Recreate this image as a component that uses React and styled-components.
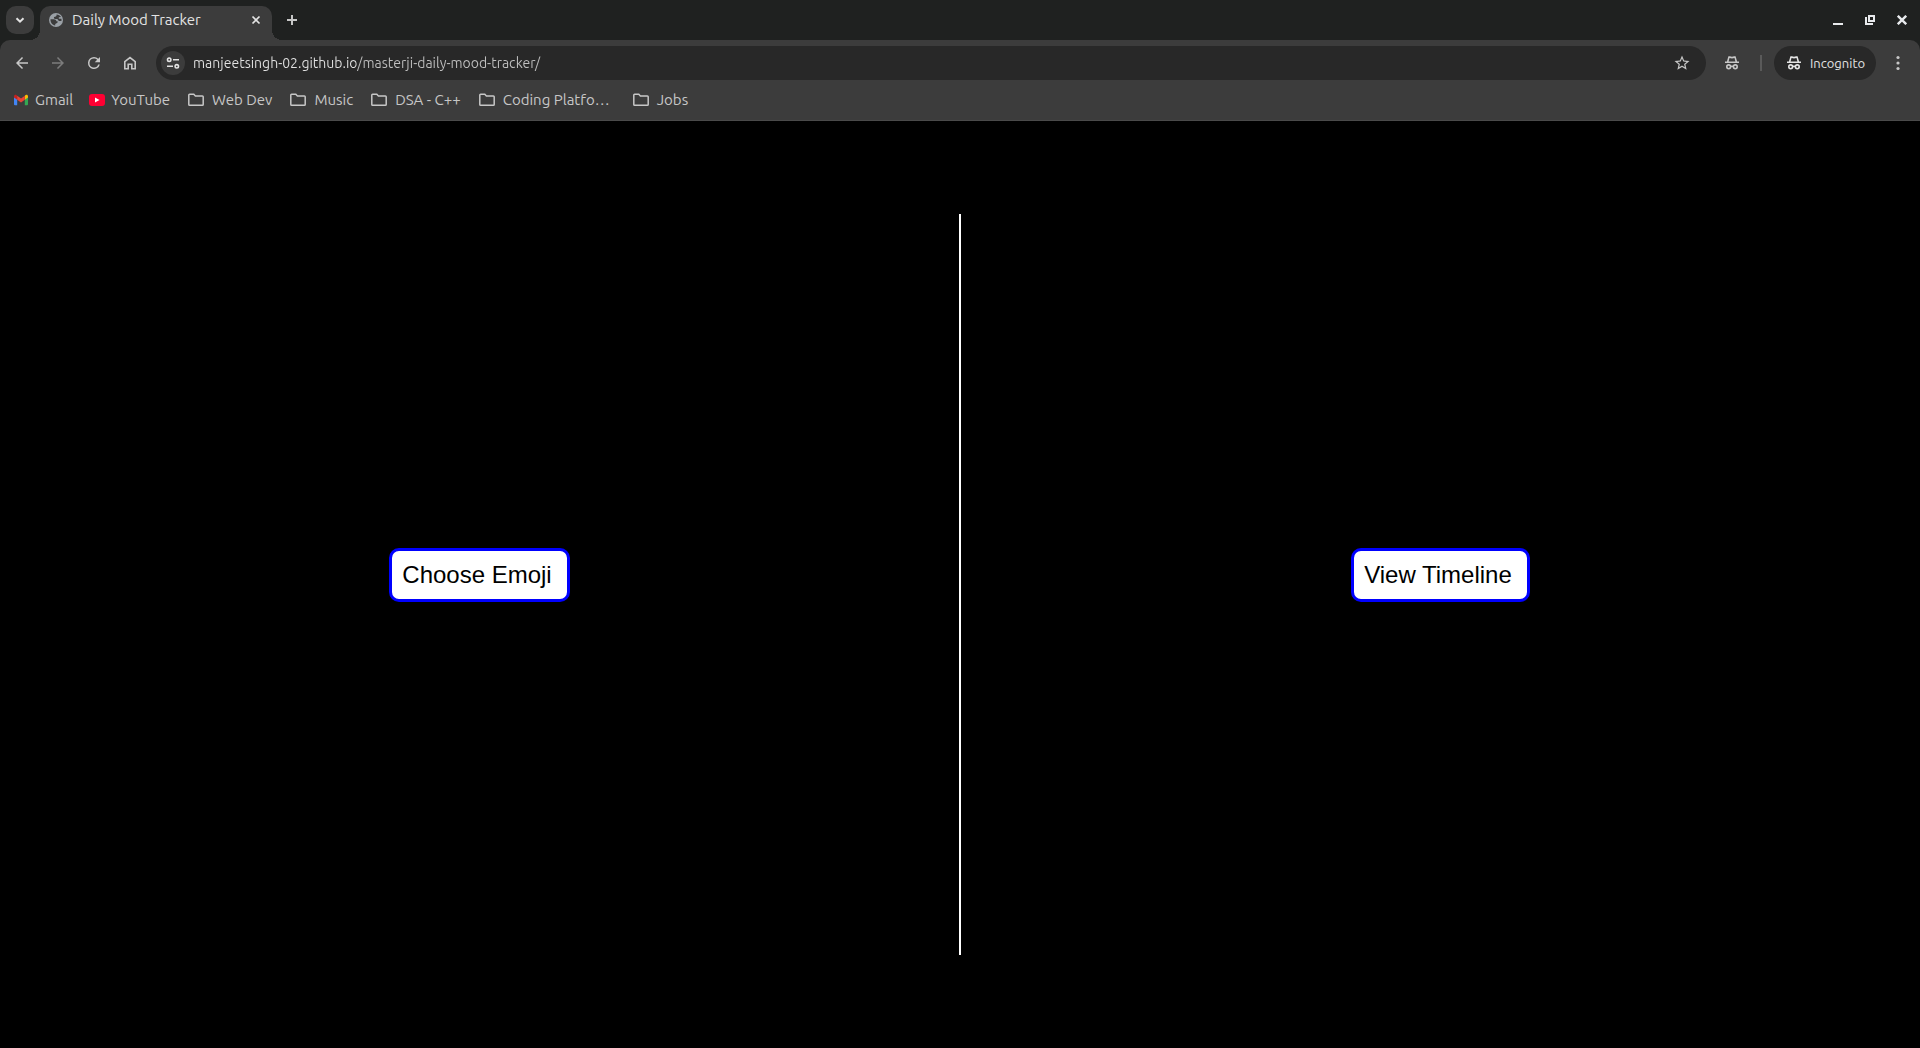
import React from "react";
import styled, { createGlobalStyle } from "styled-components";

const GlobalStyle = createGlobalStyle`
  *, *::before, *::after { box-sizing: border-box; }
  html, body, #root { height: 100%; }
  body {
    margin: 0;
    background: #000;
    font-family: "Liberation Sans", Arial, sans-serif;
  }
  button { font: inherit; border: 0; padding: 0; cursor: pointer; }
  svg { display: block; flex: none; }
`;

const Window = styled.div`
  display: flex;
  flex-direction: column;
  min-height: 100%;
`;

const Chrome = styled.header`
  background: #1f2120;
  color: #c7c7c7;
  font-family: Ubuntu, "Noto Sans", sans-serif;
`;

const TabStrip = styled.div`
  display: flex;
  align-items: center;
  height: 40px;
  padding: 0 4px 0 6px;
`;

const TabSearch = styled.button`
  display: grid;
  place-items: center;
  width: 28px;
  height: 28px;
  margin-right: 6px;
  border-radius: 10px;
  background: #3c3c3c;
  color: #e3e3e3;
`;

const Tab = styled.div`
  position: relative;
  display: flex;
  align-items: center;
  align-self: flex-end;
  gap: 8px;
  width: 232px;
  height: 34px;
  padding: 0 8px 6px;
  border-radius: 10px 10px 0 0;
  background: #3c3c3c;
  color: #e3e3e3;

  &::before,
  &::after {
    content: "";
    position: absolute;
    bottom: 0;
    width: 10px;
    height: 10px;
  }
  &::before {
    right: 100%;
    background: radial-gradient(circle at 0 0, transparent 10px, #3c3c3c 10px);
  }
  &::after {
    left: 100%;
    background: radial-gradient(circle at 100% 0, transparent 10px, #3c3c3c 10px);
  }
`;

const TabTitle = styled.span`
  flex: 1;
  overflow: hidden;
  white-space: nowrap;
  font-size: 15px;
  line-height: 20px;
`;

const IconButton = styled.button`
  display: grid;
  place-items: center;
  flex: none;
  width: ${(p) => p.$size || 28}px;
  height: ${(p) => p.$size || 28}px;
  border-radius: 50%;
  background: ${(p) => p.$fill || "transparent"};
  color: ${(p) => p.$tone || "#c7c7c7"};
`;

const WindowControls = styled.div`
  display: flex;
  gap: 4px;
  margin-left: auto;
`;

const Toolbar = styled.div`
  display: flex;
  align-items: center;
  height: 46px;
  padding: 0 8px;
  border-radius: 10px 10px 0 0;
  background: #3c3c3c;
`;

const NavButtons = styled.nav`
  display: flex;
  gap: 8px;
  margin-right: 12px;
`;

const AddressBar = styled.div`
  display: flex;
  align-items: center;
  flex: 1;
  height: 34px;
  padding: 0 10px 0 5px;
  border-radius: 17px;
  background: #282828;
`;

const AddressInput = styled.input`
  flex: 1;
  min-width: 0;
  height: 24px;
  padding: 0;
  margin: 0 8px;
  border: 0;
  outline: 0;
  background: linear-gradient(to right, #e3e3e3 163px, #c0c0c0 163px);
  background-clip: text;
  -webkit-text-fill-color: transparent;
  color: #e3e3e3;
  font: 14px/24px Ubuntu, "Noto Sans", sans-serif;
`;

const Separator = styled.span`
  width: 2px;
  height: 16px;
  margin: 0 12px 0 2px;
  background: #5a5a5a;
`;

const Profile = styled.button`
  display: flex;
  align-items: center;
  gap: 8px;
  min-width: 102px;
  height: 34px;
  padding: 0 10px 0 12px;
  margin-right: 8px;
  border-radius: 17px;
  background: #282828;
  color: #e3e3e3;
  font-size: 13px;
`;

const Bookmarks = styled.nav`
  display: flex;
  align-items: center;
  gap: 16px;
  height: 35px;
  padding: 0 13px 7px;
  border-bottom: 1px solid #4a4a4a;
  background: #3c3c3c;
`;

const Bookmark = styled.a`
  display: flex;
  align-items: center;
  gap: 6px;
  color: #c7c7c7;
  font-size: 15px;
  line-height: 20px;
  text-decoration: none;
  white-space: nowrap;
`;

const BookmarkLabel = styled.span`
  min-width: ${(p) => (p.$full ? "112px" : "0")};
`;

const Main = styled.main`
  display: flex;
  align-items: center;
  flex: 1;
`;

const Panel = styled.section`
  display: flex;
  justify-content: center;
  flex: 1;
  padding-bottom: 19px;
`;

const Divider = styled.div`
  align-self: stretch;
  width: 2px;
  margin: 93px 0;
  background: #fff;
`;

const ActionButton = styled.button`
  && {
    padding: 10px 15px 10px 10px;
    border: 3px solid #00f;
  }
  border-radius: 10px;
  background: #fff;
  color: #000;
  font-size: 24px;
  line-height: 28px;
`;

const Icon = ({ size = 18, box = 24, children }) => (
  <svg width={size} height={size} viewBox={`0 0 ${box} ${box}`} fill="currentColor" aria-hidden="true">
    {children}
  </svg>
);

const Stroke = ({ size = 16, width = 2, children }) => (
  <svg
    width={size}
    height={size}
    viewBox={`0 0 ${size} ${size}`}
    fill="none"
    stroke="currentColor"
    strokeWidth={width}
    aria-hidden="true"
  >
    {children}
  </svg>
);

const Globe = () => (
  <svg width="16" height="16" viewBox="0 0 16 16" aria-hidden="true">
    <circle cx="8" cy="8" r="7" fill="#9aa0a6" />
    <path
      fill="#3c3c3c"
      d="M2.500 7.300h3.300c1.400 0 2.300.7 2.600 1.900h1.200v1.300c-.9 1-2.100.9-2.400 1.700v1.300C4.400 13.200 2.300 10.600 2.500 7.300zM8.600 2.500c1.800 0 3.500 1 4.400 2.600l-2.200.2v1.400h2.600c.2.800.2 1.600 0 2.200-1.200.3-2.600.2-3.200-.7L9.400 7H7.200C6 7 5.600 5.900 6.100 5l1.700-.6c.7-.3.800-1 .8-1.900z"
    />
  </svg>
);

const Incognito = () => (
  <Icon size={16} box={16}>
    <path fillRule="evenodd" d="M4.400 1.200h1.500l2.100.6 2.100-.6h1.500l1.500 5.200H15v1.700H1V6.400h1.900zM5.500 3l-.9 3.400h6.800L10.500 3 8 3.600z" />
    <g fill="none" stroke="currentColor" strokeWidth="1.600">
      <circle cx="4.700" cy="11.800" r="1.900" />
      <circle cx="11.300" cy="11.800" r="1.900" />
      <path d="M6.600 11.500q1.400-.6 2.800 0" />
    </g>
  </Icon>
);

const Gmail = () => (
  <svg width="16" height="16" viewBox="-1 -1 16 16" aria-hidden="true">
    <path fill="#4285f4" d="M0 3.500l3.200 2.400v6.400H1a1 1 0 0 1-1-1z" />
    <path fill="#34a853" d="M14 3.500l-3.200 2.400v6.400H13a1 1 0 0 0 1-1z" />
    <path fill="#fbbc04" d="M10.800 2.700l.9-.7C12.700 1.300 14 2 14 3.200v1.200l-3.200 2.400z" />
    <path fill="#c5221f" d="M0 4.400V3.200C0 2 1.300 1.300 2.300 2l.9.700v4.100z" />
    <path fill="#ea4335" d="M3.200 6.800V2.700L7 5.500l3.800-2.800v4.100L7 9.600z" />
  </svg>
);

const YouTube = () => (
  <svg width="16" height="12" viewBox="0 0 16 12" aria-hidden="true">
    <rect width="16" height="12" rx="3" fill="#ff0033" />
    <path fill="#fff" d="M6 3.500v5L10.500 6z" />
  </svg>
);

const Folder = () => (
  <svg width="20" height="14" viewBox="-2 0 20 14" fill="none" stroke="currentColor" strokeWidth="1.500" aria-hidden="true">
    <path d="M.8 2q0-.8.8-.8h4.200l1.600 1.700h7q.8 0 .8.800v7.700q0 .8-.8.800H1.600q-.8 0-.8-.8z" />
  </svg>
);

const bookmarks = [
  { label: "Gmail", icon: Gmail },
  { label: "YouTube", icon: YouTube },
  { label: "Web Dev", icon: Folder },
  { label: "Music", icon: Folder },
  { label: "DSA - C++", icon: Folder },
  { label: "Coding Platfo…", icon: Folder, full: true },
  { label: "Jobs", icon: Folder },
];

export default function App() {
  return (
    <Window>
      <GlobalStyle />
      <Chrome>
        <TabStrip>
          <TabSearch aria-label="Search tabs">
            <Stroke size={10}><path d="M1.500 3.200L5 6.700l3.500-3.500" /></Stroke>
          </TabSearch>
          <Tab>
            <Globe />
            <TabTitle>Daily Mood Tracker</TabTitle>
            <IconButton $size={16} $tone="#e3e3e3" aria-label="Close tab">
              <Stroke size={10} width={1.7}><path d="M1.500 1.500l7 7M8.500 1.500l-7 7" /></Stroke>
            </IconButton>
          </Tab>
          <IconButton $size={40} aria-label="New tab">
            <Stroke size={10}><path d="M5 0v10M0 5h10" /></Stroke>
          </IconButton>
          <WindowControls>
            <IconButton $tone="#e8eaed" aria-label="Minimize">
              <Stroke size={10}><path d="M0 9h10" /></Stroke>
            </IconButton>
            <IconButton $tone="#e8eaed" aria-label="Restore">
              <Stroke size={10}><path d="M4 1h5v5H4zM1 2v7h7" /></Stroke>
            </IconButton>
            <IconButton $tone="#e8eaed" aria-label="Close">
              <Stroke size={10} width={2.4}><path d="M.8.8l8.400 8.400M9.200.8L.8 9.200" /></Stroke>
            </IconButton>
          </WindowControls>
        </TabStrip>
        <Toolbar>
          <NavButtons aria-label="Browser navigation">
            <IconButton aria-label="Back">
              <Icon><path d="M20 11H7.830l5.590-5.590L12 4l-8 8 8 8 1.410-1.410L7.830 13H20z" /></Icon>
            </IconButton>
            <IconButton $tone="#7c7c7c" aria-label="Forward">
              <Icon><path d="M12 4l-1.410 1.410L16.170 11H4v2h12.170l-5.580 5.590L12 20l8-8z" /></Icon>
            </IconButton>
            <IconButton aria-label="Reload">
              <Icon><path d="M17.650 6.350A7.960 7.960 0 0 0 12 4a8 8 0 1 0 7.730 10h-2.080A6 6 0 1 1 12 6c1.660 0 3.140.69 4.220 1.780L13 11h7V4z" /></Icon>
            </IconButton>
            <IconButton aria-label="Home">
              <Stroke width={1.6}><path d="M2.800 6.600L8 2.500l5.200 4.100v7.100H9.800V9.300H6.200v4.400H2.800z" /></Stroke>
            </IconButton>
          </NavButtons>
          <AddressBar>
            <IconButton $size={24} $fill="#3c3c3c" $tone="#e3e3e3" aria-label="View site information">
              <Stroke width={1.6}>
                <circle cx="4.200" cy="4.700" r="1.700" />
                <path d="M8 4.700h6M2 11.300h6" />
                <circle cx="11.800" cy="11.300" r="1.700" />
              </Stroke>
            </IconButton>
            <AddressInput
              aria-label="Address"
              spellCheck={false}
              defaultValue="manjeetsingh-02.github.io/masterji-daily-mood-tracker/"
            />
            <IconButton aria-label="Bookmark this tab">
              <Icon><path d="M22 9.240l-7.190-.62L12 2 9.190 8.630 2 9.240l5.460 4.730L5.820 21 12 17.270 18.180 21l-1.630-7.030zM12 15.400l-3.760 2.270 1-4.280-3.320-2.880 4.380-.38L12 6.100l1.710 4.040 4.380.38-3.320 2.880 1 4.280z" /></Icon>
            </IconButton>
          </AddressBar>
          <IconButton $size={52} aria-label="Incognito mode">
            <Incognito />
          </IconButton>
          <Separator />
          <Profile>
            <Incognito />
            Incognito
          </Profile>
          <IconButton aria-label="Menu">
            <Icon size={16} box={16}>
              <circle cx="8" cy="2.500" r="1.600" />
              <circle cx="8" cy="8" r="1.600" />
              <circle cx="8" cy="13.500" r="1.600" />
            </Icon>
          </IconButton>
        </Toolbar>
        <Bookmarks aria-label="Bookmarks">
          {bookmarks.map(({ label, icon: Glyph, full }) => (
            <Bookmark href="#" key={label}>
              <Glyph />
              <BookmarkLabel $full={full}>{label}</BookmarkLabel>
            </Bookmark>
          ))}
        </Bookmarks>
      </Chrome>
      <Main>
        <Panel>
          <ActionButton>Choose Emoji</ActionButton>
        </Panel>
        <Divider />
        <Panel>
          <ActionButton>View Timeline</ActionButton>
        </Panel>
      </Main>
    </Window>
  );
}
